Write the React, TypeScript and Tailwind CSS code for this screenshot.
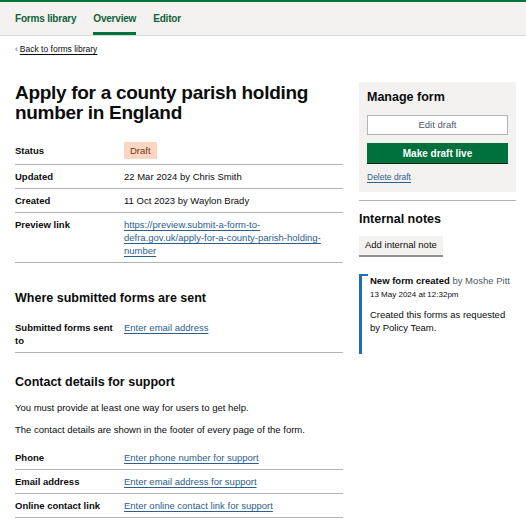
import React from 'react';

const font = { fontFamily: '"Liberation Sans", Arial, sans-serif' };

const linkCls = 'text-[#2e5e8c] underline underline-offset-[2px] decoration-[1px]';

const Row: React.FC<{ label: string; children: React.ReactNode }> = ({ label, children }) => (
  <div className="flex border-b border-[#b1b4b6] py-[5px] text-[9.5px] leading-[13px]">
    <div className="w-[109px] shrink-0 pr-2 font-bold">{label}</div>
    <div className="flex-1">{children}</div>
  </div>
);

const App: React.FC = () => {
  return (
    <div className="min-h-screen bg-white text-[#0b0c0c]" style={font}>
      {/* Service navigation */}
      <div className="border-t-2 border-[#00703c] bg-[#f3f2f1] border-b border-b-[#d8d8d8]">
        <nav className="flex h-[33px] gap-[17px] px-[15px] text-[10px] font-bold tracking-[-0.2px] text-[#10623a]">
          <a className="flex items-center">Forms library</a>
          <a className="relative flex items-center">
            Overview
            <span className="absolute bottom-0 left-0 right-0 h-[3px] bg-[#00703c]" />
          </a>
          <a className="flex items-center">Editor</a>
        </nav>
      </div>

      <div className="px-[15px]">
        <div className="pt-[7px] text-[8.5px] leading-[12px]">
          <span className="mr-[2px] text-[#505a5f]">&lsaquo;</span>
          <a className="underline underline-offset-[2px]">Back to forms library</a>
        </div>

        <div className="mt-[12px] flex gap-[16px]">
          {/* Main column */}
          <div className="w-[328px] shrink-0">
            <h1 className="mt-[16px] text-[19px] font-bold leading-[20px] tracking-[-0.3px]">
              Apply for a county parish holding number in England
            </h1>

            <div className="mt-[13px]">
              <div className="flex items-center border-b border-[#b1b4b6] pt-[6px] pb-[5px] text-[9.5px] leading-[13px]">
                <div className="w-[109px] shrink-0 font-bold">Status</div>
                <span className="bg-[#fcd6c3] px-[6px] py-[2px] text-[#6e3619]">Draft</span>
              </div>
              <div className="flex border-b border-[#b1b4b6] py-[5px] text-[9.5px] leading-[13px]">
                <div className="w-[109px] shrink-0 font-bold">Updated</div>
                <div>22 Mar 2024 by Chris Smith</div>
              </div>
              <div className="flex border-b border-[#b1b4b6] py-[5px] text-[9.5px] leading-[13px]">
                <div className="w-[109px] shrink-0 font-bold">Created</div>
                <div>11 Oct 2023 by Waylon Brady</div>
              </div>
              <Row label="Preview link">
                <a className={`${linkCls} block pr-[20px] break-words`}>
                  https://preview.submit-a-form-to-defra.gov.uk/apply-for-a-county-parish-holding-number
                </a>
              </Row>
            </div>

            <h2 className="mt-[27px] text-[12.5px] font-bold leading-[16px]">Where submitted forms are sent</h2>
            <div className="mt-[10px]">
              <Row label="Submitted forms sent to">
                <a className={linkCls}>Enter email address</a>
              </Row>
            </div>

            <h2 className="mt-[21px] text-[12.5px] font-bold leading-[16px]">Contact details for support</h2>
            <p className="mt-[11px] text-[9.5px] leading-[13px]">You must provide at least one way for users to get help.</p>
            <p className="mt-[9px] text-[9.5px] leading-[13px]">
              The contact details are shown in the footer of every page of the form.
            </p>
            <div className="mt-[10px]">
              <Row label="Phone">
                <a className={linkCls}>Enter phone number for support</a>
              </Row>
              <Row label="Email address">
                <a className={linkCls}>Enter email address for support</a>
              </Row>
              <Row label="Online contact link">
                <a className={linkCls}>Enter online contact link for support</a>
              </Row>
            </div>
          </div>

          {/* Side column */}
          <div className="w-[157px] shrink-0">
            <div className="mt-[15px] bg-[#f3f2f1] px-[8px] pt-[7px] pb-[5px]">
              <h2 className="text-[12.5px] font-bold leading-[16px]">Manage form</h2>
              <button className="mt-[10px] block h-[20px] w-full border border-[#b1b4b6] bg-white text-[9.5px] text-[#505a5f]">
                Edit draft
              </button>
              <button className="mt-[8px] block h-[20px] w-full bg-[#00703c] text-[10px] font-semibold text-white shadow-[0_1px_0_#002d18]">
                Make draft live
              </button>
              <a className={`${linkCls} mt-[5px] inline-block text-[8.5px] leading-[12px]`}>Delete draft</a>
            </div>

            <div className="mt-[8px] border-t border-[#b1b4b6]" />

            <h2 className="mt-[10px] text-[12.5px] font-bold leading-[16px]">Internal notes</h2>
            <button className="mt-[9px] block h-[19px] bg-[#f3f2f1] px-[6px] text-[9.5px] shadow-[0_2px_0_#929191]">
              Add internal note
            </button>

            <div className="relative mt-[19px] border-l-[3px] border-[#1d70b8] pl-[8px] pb-[20px]">
              <span className="absolute left-0 top-0 h-[2px] w-[6px] bg-[#1d70b8]" />
              <div className="text-[9.5px] leading-[13px]">
                <span className="font-bold">New form created</span>{' '}
                <span className="text-[#505a5f]">by Moshe Pitt</span>
              </div>
              <div className="mt-[2px] text-[8px] leading-[11px]">13 May 2024 at 12:32pm</div>
              <p className="mt-[9px] text-[9.5px] leading-[12.5px]">
                Created this forms as requested by Policy Team.
              </p>
            </div>
          </div>
        </div>
      </div>
    </div>
  );
};

export default App;
